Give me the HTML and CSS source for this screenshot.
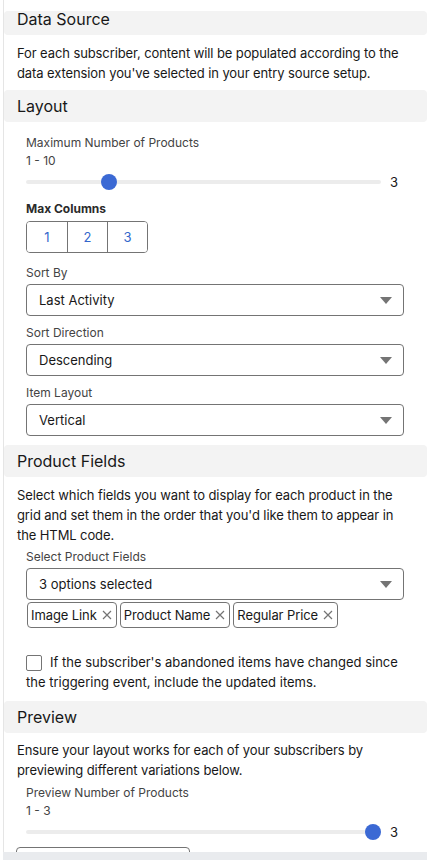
FILE: index.html
```html
<!DOCTYPE html>
<html lang="en">
<head>
<meta charset="utf-8">
<title>Product Recommendations</title>
<link rel="stylesheet" href="styles.css">
</head>
<body>
<div class="panel">
  <section class="section">
    <h2 class="section-header first">Data Source</h2>
    <div class="section-body first-body">
      <p class="desc">For each subscriber, content will be populated according to the data extension you've selected in your entry source setup.</p>
    </div>
  </section>

  <section class="section">
    <h2 class="section-header">Layout</h2>
    <div class="section-body layout-body">
      <div class="field">
        <div class="label">Maximum Number of Products</div>
        <div class="label">1 - 10</div>
        <div class="slider">
          <div class="track"><span class="thumb" style="--p: 0.2222"></span></div>
          <span class="value">3</span>
        </div>
      </div>
      <div class="field cols">
        <div class="label bold">Max Columns</div>
        <div class="btn-group">
          <button class="btn">1</button>
          <button class="btn">2</button>
          <button class="btn">3</button>
        </div>
      </div>
      <div class="field sel first-sel">
        <div class="label">Sort By</div>
        <div class="select"><span>Last Activity</span>
          <svg class="caret" width="12" height="7" viewBox="0 0 12 7"><path d="M0 0H12L6 7Z" fill="#747474"/></svg>
        </div>
      </div>
      <div class="field sel">
        <div class="label">Sort Direction</div>
        <div class="select"><span>Descending</span>
          <svg class="caret" width="12" height="7" viewBox="0 0 12 7"><path d="M0 0H12L6 7Z" fill="#747474"/></svg>
        </div>
      </div>
      <div class="field sel">
        <div class="label">Item Layout</div>
        <div class="select"><span>Vertical</span>
          <svg class="caret" width="12" height="7" viewBox="0 0 12 7"><path d="M0 0H12L6 7Z" fill="#747474"/></svg>
        </div>
      </div>
    </div>
  </section>

  <section class="section">
    <h2 class="section-header">Product Fields</h2>
    <div class="section-body">
      <p class="desc">Select which fields you want to display for each product in the grid and set them in the order that you'd like them to appear in the HTML code.</p>
      <div class="field pf">
        <div class="label">Select Product Fields</div>
        <div class="select"><span>3 options selected</span>
          <svg class="caret" width="12" height="7" viewBox="0 0 12 7"><path d="M0 0H12L6 7Z" fill="#747474"/></svg>
        </div>
        <div class="pills">
          <span class="pill">Image Link<svg class="x" width="10" height="10" viewBox="0 0 10 10"><path d="M1 1L9 9M9 1L1 9" stroke="#747474" stroke-width="1.2"/></svg></span>
          <span class="pill">Product Name<svg class="x" width="10" height="10" viewBox="0 0 10 10"><path d="M1 1L9 9M9 1L1 9" stroke="#747474" stroke-width="1.2"/></svg></span>
          <span class="pill">Regular Price<svg class="x" width="10" height="10" viewBox="0 0 10 10"><path d="M1 1L9 9M9 1L1 9" stroke="#747474" stroke-width="1.2"/></svg></span>
        </div>
      </div>
      <p class="check-row"><span class="checkbox"></span>If the subscriber's abandoned items have changed since the triggering event, include the updated items.</p>
    </div>
  </section>

  <section class="section">
    <h2 class="section-header">Preview</h2>
    <div class="section-body preview-body">
      <p class="desc">Ensure your layout works for each of your subscribers by previewing different variations below.</p>
      <div class="field pv">
        <div class="label">Preview Number of Products</div>
        <div class="label">1 - 3</div>
        <div class="slider">
          <div class="track"><span class="thumb" style="--p: 1"></span></div>
          <span class="value">3</span>
        </div>
      </div>
      <div class="preview-box"></div>
    </div>
  </section>
</div>
<div class="footer-bar"></div>
</body>
</html>
```

FILE: styles.css
```css
html, body {
  margin: 0;
  padding: 0;
  height: 100%;
  overflow: hidden;
  background: #ffffff;
}

body {
  font-family: Inter, "Noto Sans", "Liberation Sans", sans-serif;
  color: #181818;
}

.panel {
  margin-left: 3px;
  border-left: 1px solid #e5e5e5;
  padding-top: 11px;
  min-height: 100%;
  box-sizing: border-box;
}

.section-header {
  margin: 0;
  background: #f3f3f3;
  border-radius: 4px;
  height: 32px;
  line-height: 32px;
  padding: 0 13px;
  font-size: 16px;
  font-weight: 400;
  color: #181818;
}

.section-header.first {
  height: 24px;
  line-height: 16px;
}

.section-body {
  padding: 8px 23px 9px 13px;
}

.section-body.first-body {
  padding-bottom: 7px;
}

.desc {
  margin: 0;
  font-size: 13px;
  line-height: 20px;
  letter-spacing: -0.1px;
}

.layout-body {
  padding-top: 12px;
}

.field {
  padding-left: 9px;
}

.label {
  font-size: 12px;
  line-height: 18px;
  color: #444444;
}

.label.bold {
  font-weight: 700;
  color: #2b2b2b;
}

.slider {
  display: flex;
  align-items: center;
  height: 16px;
  margin-top: 4px;
}

.track {
  position: relative;
  width: 355px;
  height: 4px;
  border-radius: 2px;
  background: #ececec;
  margin-right: 9px;
}

.thumb {
  position: absolute;
  top: -6px;
  left: calc((100% - 16px) * var(--p));
  width: 16px;
  height: 16px;
  border-radius: 50%;
  background: #3b69d4;
}

.value {
  font-size: 13px;
  color: #181818;
}

.cols {
  margin-top: 10px;
}

.btn-group {
  display: inline-flex;
  margin-top: 3px;
  border: 1px solid #747474;
  border-radius: 4px;
  overflow: hidden;
}

.btn {
  width: 40px;
  height: 30px;
  border: 0;
  background: #ffffff;
  font-family: inherit;
  font-size: 13px;
  color: #3366cc;
  padding: 0;
}

.btn + .btn {
  border-left: 1px solid #747474;
}

.sel {
  margin-top: 8px;
}

.sel.first-sel {
  margin-top: 11px;
}

.select {
  display: flex;
  align-items: center;
  justify-content: space-between;
  box-sizing: border-box;
  height: 32px;
  margin-top: 2px;
  padding: 0 11px 0 12px;
  border: 1px solid #747474;
  border-radius: 4px;
  font-size: 13px;
  color: #181818;
}

.caret {
  display: block;
}

.pf {
  margin-top: 3px;
}

.pills {
  display: flex;
  gap: 3px;
  margin-top: 2px;
  padding-left: 1px;
}

.pill {
  display: inline-flex;
  align-items: center;
  height: 26px;
  box-sizing: border-box;
  padding: 0 4px 0 3px;
  border: 1px solid #747474;
  border-radius: 4px;
  font-size: 13px;
  letter-spacing: -0.1px;
  color: #181818;
}

.pill .x {
  margin-left: 5px;
}

.check-row {
  margin: 24px 0 0 0;
  padding-left: 9px;
  font-size: 13px;
  line-height: 20px;
  letter-spacing: 0;
}

.checkbox {
  display: inline-block;
  width: 16px;
  height: 16px;
  box-sizing: border-box;
  border: 1px solid #747474;
  border-radius: 2px;
  background: #ffffff;
  vertical-align: -4px;
  margin-right: 8px;
}

.preview-body {
  padding-top: 7px;
}

.pv {
  margin-top: 4px;
}

.preview-box {
  margin-top: 7px;
  margin-left: -1px;
  width: 174px;
  height: 32px;
  box-sizing: border-box;
  border: 1px solid #747474;
  border-radius: 4px;
}

.footer-bar {
  position: fixed;
  left: 3px;
  right: 0;
  bottom: 0;
  height: 8px;
  background: #e9ebee;
}
```
